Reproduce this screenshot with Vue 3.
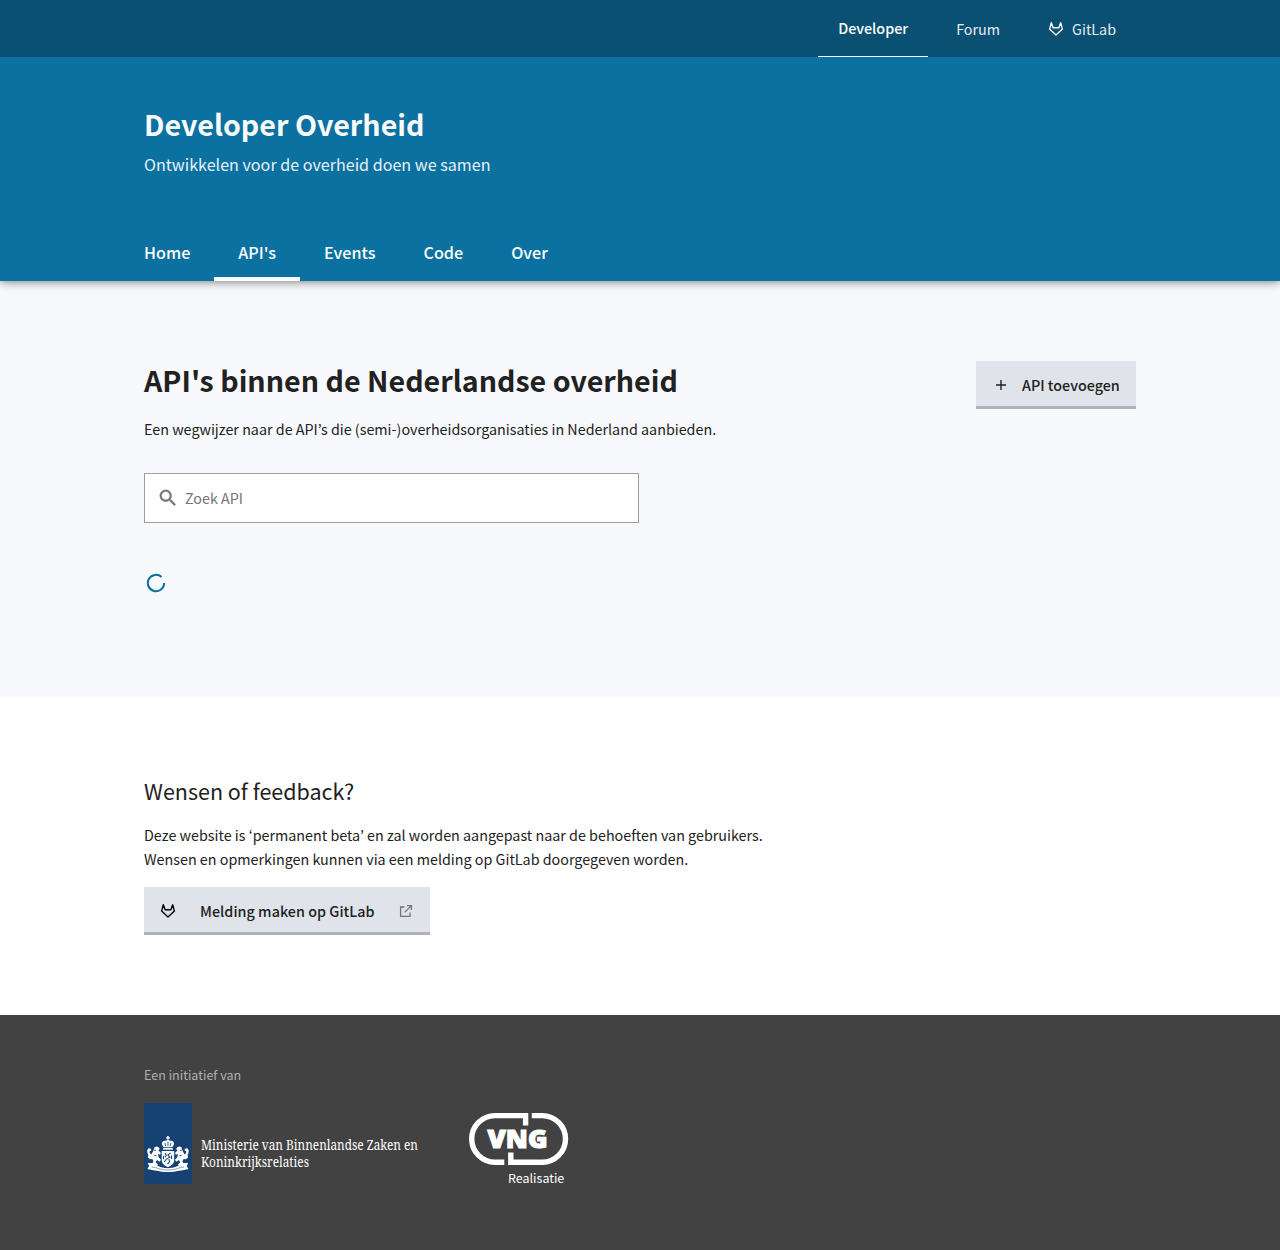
<script setup>
const tabs = [
  { label: 'Home' },
  { label: "API's", active: true },
  { label: 'Events' },
  { label: 'Code' },
  { label: 'Over' },
]
const fox = 'M3.3 1.8 5.1 6.7h5.8l1.8-4.9 1.7 6.3L8 13.9 1.6 8.1z'
</script>

<template>
  <div class="page">
    <div class="topbar">
      <nav class="container topnav">
        <a class="toplink current">Developer</a>
        <a class="toplink">Forum</a>
        <a class="toplink">
          <svg class="fox" width="16" height="16" viewBox="0 0 16 16"><path :d="fox" /></svg>GitLab
        </a>
      </nav>
    </div>

    <header class="header">
      <div class="container">
        <div class="brand">Developer Overheid</div>
        <div class="tagline">Ontwikkelen voor de overheid doen we samen</div>
        <nav class="tabs">
          <a v-for="t in tabs" :key="t.label" class="tab" :class="{ active: t.active }">{{ t.label }}</a>
        </nav>
      </div>
    </header>

    <main class="main">
      <div class="container">
        <div class="intro">
          <div>
            <h1>API's binnen de Nederlandse overheid</h1>
            <p class="lead">Een wegwijzer naar de API’s die (semi-)overheidsorganisaties in Nederland aanbieden.</p>
          </div>
          <a class="button add">
            <svg width="18" height="18" viewBox="0 0 18 18"><path d="M9 4v10M4 9h10" fill="none" stroke="#212121" stroke-width="1.4" /></svg>
            <span>API toevoegen</span>
          </a>
        </div>
        <div class="search">
          <svg width="22" height="22" viewBox="0 0 24 24"><path fill="#757575" stroke="#757575" stroke-width=".4" d="M15.5 14h-.79l-.28-.27A6.471 6.471 0 0 0 16 9.5 6.5 6.5 0 1 0 9.5 16c1.61 0 3.09-.59 4.23-1.57l.27.28v.79l5 4.99L20.49 19l-4.99-5zm-6 0C7.01 14 5 11.99 5 9.5S7.01 5 9.5 5 14 7.01 14 9.5 11.99 14 9.5 14z" /></svg>
          <span>Zoek API</span>
        </div>
        <svg class="spinner" width="24" height="24" viewBox="0 0 24 24"><path d="M17.6 6A8.2 8.2 0 1 0 20.2 12" fill="none" stroke="#0b71a1" stroke-width="2" /></svg>
      </div>
    </main>

    <section class="feedback">
      <div class="container">
        <h2>Wensen of feedback?</h2>
        <p>Deze website is ‘permanent beta’ en zal worden aangepast naar de behoeften van gebruikers.<br />Wensen en opmerkingen kunnen via een melding op GitLab doorgegeven worden.</p>
        <a class="button report">
          <svg class="fox dark" width="16" height="16" viewBox="0 0 16 16"><path :d="fox" /></svg>
          <span>Melding maken op GitLab</span>
          <svg class="external" width="14" height="14" viewBox="0 0 14 14"><path d="M5.5 3H1.6v9.4H11V8.5M8 1.6h4.4V6M12.4 1.6 5.6 8.4" fill="none" stroke="#757575" stroke-width="1.3" /></svg>
        </a>
      </div>
    </section>

    <footer class="footer">
      <div class="container">
        <div class="initiative">Een initiatief van</div>
        <div class="logos">
          <svg class="rijk" width="275" height="81" viewBox="0 0 275 81">
            <rect width="47.7" height="81" fill="#154273" />
            <g transform="translate(.9 1.4) scale(.96 .97)">
              <g fill="#fff">
                <!-- crown -->
                <path d="M23.2 32.6h1.6v1.3h1.2v1.3h-1.2v1.3h-1.6v-1.3H22v-1.3h1.2z" />
                <path d="M19.6 44.3c-1.9-2.4-2.6-4.4-1.2-5.9 1.2-1.2 3.4-.5 5.6-1.9 2.2 1.4 4.4.7 5.6 1.9 1.4 1.5.7 3.5-1.2 5.9z" />
                <path d="M19 45h10v1.7H19z" />
                <!-- shield -->
                <path d="M17.5 48h13v9.2c0 4-3.2 5.6-6.5 7.5-3.3-1.9-6.5-3.5-6.5-7.5z" />
                <!-- supporters -->
                <path id="lion" d="M10 44.2c1.7-1.7 4.9-.7 5.4 1.6l-1.2 1.8 2.5 2.6-1 1.6-2-1 .5 3.3 2.5 3-1.3 1.9-2.8-1.8-1.5 2.5 2.5 2.2-.6 1.4H8.1l-.6-1.6 1.4-3.2-1.2-2.2-2.4.2-2.4-2 .7-2-.9-2.1-.4-3 1.5-2.2 2.6.6.3 1.8-1.8.7.2 1.7 1.4 1.6 1.7-2.4z" />
                <use href="#lion" transform="matrix(-1 0 0 1 48 0)" />
                <!-- ribbon -->
                <path d="M3 60.4h5.2l.8 2.2c4.3.3 8.4 3.2 15 3.2s10.7-2.9 15-3.2l.8-2.2H45l-1.4 3 1.8 3.1-4.6 1.2c-4.4.2-8.4 2.1-16.8 2.1s-12.4-1.9-16.8-2.1l-4.6-1.2 1.8-3.1z" />
              </g>
              <g fill="none" stroke="#154273">
                <path d="M20.7 39.6l1 3.4M24 38.4v4.6M27.3 39.6l-1 3.4M9 47l2.6.4M9.6 52.4l2.5.7M39 47l-2.6.4M38.4 52.4l-2.5.7" stroke-width=".9" />
                <path d="M21 50.2l1.2 2.2-1 2M26.8 49.9l-2.9 2.3 2 2.2-3.7 2.2-2.2 3M25 56.5l.7 2.7-2.2 2.3M27.5 52.5l.4 3.8M19.4 53v3.6" stroke-width="1.1" />
                <path d="M7 64.6c6 .2 9 3.1 17 3.1s11-2.9 17-3.1" stroke-width=".5" />
              </g>
            </g>
            <g class="ministry">
              <text x="57" y="47" textLength="217" lengthAdjust="spacingAndGlyphs">Ministerie van Binnenlandse Zaken en</text>
              <text x="57" y="64" textLength="108" lengthAdjust="spacingAndGlyphs">Koninkrijksrelaties</text>
            </g>
          </svg>
          <svg class="vng" width="100" height="84" viewBox="0 0 100 84">
            <g fill="none" stroke="#fff" stroke-width="5.4">
              <path d="M56.6 22.4V12.6H26a23.3 23.3 0 0 0 0 46.6H35.3" />
              <path d="M62.8 12.6H73.2a23.3 23.3 0 0 1 0 46.6H41.8V49.5" />
            </g>
            <text class="vng-name" x="18.5" y="44.6" textLength="60" lengthAdjust="spacingAndGlyphs">VNG</text>
            <text class="vng-sub" x="39" y="80" textLength="56.3" lengthAdjust="spacingAndGlyphs">Realisatie</text>
          </svg>
        </div>
      </div>
    </footer>
  </div>
</template>

<style>
body {
  margin: 0;
}
</style>

<style scoped>
.page {
  min-height: 1250px;
  display: flex;
  flex-direction: column;
  font-family: "Noto Sans CJK KR", "Noto Sans", sans-serif;
  font-size: 14.33px;
  line-height: 24px;
  color: #212121;
  background: #fff;
}
.container {
  width: 992px;
  margin: 0 auto;
}
.topbar {
  height: 57px;
  background: #0a5072;
  position: relative;
  z-index: 1;
}
.topnav {
  display: flex;
  justify-content: flex-end;
  gap: 8px;
}
.toplink {
  box-sizing: border-box;
  height: 57px;
  padding: 17px 20px 0;
  display: flex;
  color: #e6edf1;
}
.toplink.current {
  font-weight: 500;
  color: #fff;
  border-bottom: 1px solid #fff;
  padding-top: 16px;
}
.fox {
  margin: 4px 8px 0 0;
  fill: none;
  stroke: #fff;
  stroke-width: 1.4;
  stroke-linejoin: round;
}
.fox.dark {
  margin: 0;
  stroke: #000;
}
.header {
  height: 224px;
  background: #0b71a1;
  color: #fff;
  box-shadow: 0 0 10px rgba(0, 0, 0, 0.6);
  position: relative;
}
.brand {
  padding-top: 47px;
  font-size: 28.65px;
  line-height: 40px;
  font-weight: 700;
  color: #fafafa;
}
.tagline {
  margin-top: 7px;
  font-size: 16.12px;
  line-height: 26px;
  color: #e6f0f5;
}
.tabs {
  display: flex;
  margin: 48px 0 0 -24px;
}
.tab {
  height: 56px;
  padding: 0 24px;
  font-size: 16.16px;
  line-height: 54px;
  font-weight: 500;
  box-sizing: border-box;
}
.tab.active {
  border-bottom: 4px solid #fff;
}
.main {
  height: 416px;
  background: #f8f9fd;
}
.intro {
  padding-top: 80px;
  display: flex;
  justify-content: space-between;
  align-items: flex-start;
}
h1 {
  margin: -1px 0 0;
  font-size: 28.63px;
  line-height: 40px;
  font-weight: 700;
}
.lead {
  margin: 17px 0 0;
}
.button {
  box-sizing: border-box;
  height: 48px;
  display: flex;
  align-items: center;
  background: #e0e3ea;
  border-bottom: 3px solid #afb2b8;
  font-weight: 500;
  padding: 3px 16px 0;
}
.add {
  width: 160px;
}
.add svg {
  margin-right: 12px;
}
.search {
  box-sizing: border-box;
  width: 495px;
  height: 50px;
  margin-top: 32px;
  padding-left: 12.4px;
  border: 1px solid #9e9e9e;
  background: #fff;
  display: flex;
  align-items: center;
  color: #757575;
}
.search span {
  margin-left: 5.6px;
}
.spinner {
  display: block;
  margin-top: 48px;
}
.feedback {
  height: 318px;
}
h2 {
  margin: 0;
  padding-top: 78px;
  font-size: 21.5px;
  line-height: 32px;
  font-weight: 400;
}
.feedback p {
  margin: 16px 0;
}
.report {
  width: 286px;
}
.report span {
  margin: 0 24px;
  letter-spacing: 0.03px;
}
.footer {
  flex: 1;
  background: #424242;
}
.initiative {
  padding-top: 48px;
  font-size: 12.54px;
  line-height: 24px;
  color: #b0b0b0;
}
.logos {
  display: flex;
  margin-top: 16px;
}
.logos svg {
  overflow: visible;
}
.vng {
  margin-left: 50px;
}
.ministry {
  fill: #fff;
  font-family: "Noto Serif", "Liberation Serif", serif;
  font-size: 13.5px;
}
.vng-name {
  fill: #fff;
  stroke: #fff;
  stroke-width: 1;
  font-family: "Noto Sans", sans-serif;
  font-weight: 900;
  font-size: 24px;
}
.vng-sub {
  fill: #fff;
  font-size: 12.2px;
}
</style>
